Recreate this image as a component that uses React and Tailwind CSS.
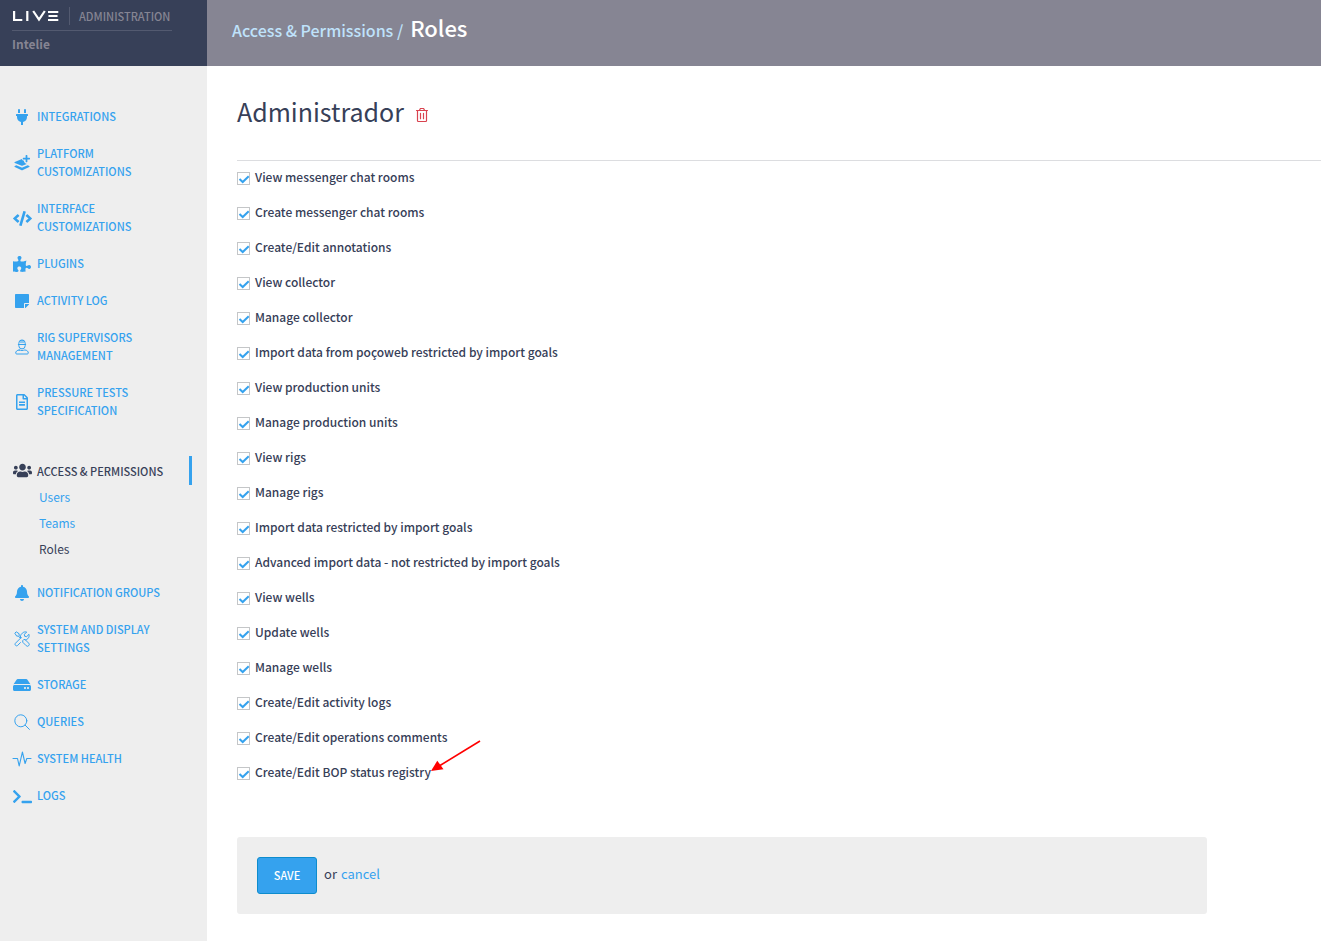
import React, { useState } from "react";
import {
  FaPlug,
  FaCode,
  FaPuzzlePiece,
  FaStickyNote,
  FaRegFileAlt,
  FaUsers,
  FaBell,
  FaHdd,
  FaTerminal,
} from "react-icons/fa";

function LayersPlusIcon() {
  return (
    <svg viewBox="0 0 16 16" className="size-4" fill="currentColor" aria-hidden="true">
      <path d="M9.300 2.700h2.300V.6c0-.3.300-.6.600-.6h.6c.3 0 .6.300.6.600v2.100h2.100c.3 0 .5.200.5.500v.8c0 .3-.2.500-.5.500h-2.100v2.100c0 .3-.3.600-.6.600h-.6c-.3 0-.6-.3-.6-.6V4.500H9.300c-.3 0-.5-.2-.5-.5v-.8c0-.3.200-.5.500-.5Z" />
      <path d="M7.300 4.200 8 4c.1 1 .9 1.700 1.900 1.800C10 7.400 11.200 8.700 12.800 8.900L8.900 10.600a2.200 2.200 0 0 1-1.800 0L.8 8c-.5-.2-.5-.9 0-1.100Z" />
      <path d="m.8 11 1.500-.7 4.700 2c.6.300 1.400.300 2 0l4.700-2 1.500.7c.5.200.5.900 0 1.100l-6.300 2.900c-.6.300-1.200.3-1.800 0L.8 12.100c-.5-.2-.5-.9 0-1.100Z" />
    </svg>
  );
}

function WorkerIcon() {
  return (
    <svg viewBox="0 0 16 16" className="size-4" fill="none" stroke="currentColor" strokeWidth="1" strokeLinecap="round" strokeLinejoin="round" aria-hidden="true">
      <path d="M4.300 5.500h7.400M4.800 5.500V4.200a3.200 3.200 0 0 1 6.400 0v1.300M7 1.200v2.500M9 1.200v2.500" />
      <path d="M4.800 6v.7a3.200 3.200 0 0 0 6.400 0V6" />
      <path d="M5.200 11C3 11 1.700 12.500 1.700 14c0 .6.400 1 1 1h10.600c.6 0 1-.4 1-1 0-1.500-1.300-3-3.500-3-1 0-1.600.5-2.800.5s-1.800-.5-2.800-.5Z" />
    </svg>
  );
}

function ToolsIcon() {
  return (
    <svg viewBox="0 0 16 16" className="size-4" fill="none" stroke="currentColor" strokeWidth="1" strokeLinejoin="round" aria-hidden="true">
      <path d="M.8 2.200 2.200.8l2.900 1.900v1.600l2.500 2.500M.8 2.200l1.900 2.900h1.600l2.500 2.500" />
      <path d="m8.800 9.600 1-1.100 1.300.1 3.600 3.600a1.700 1.700 0 0 1-2.500 2.500L8.700 11.200Z" />
      <path d="m6.700 11.300-3.200 3.300a1.600 1.600 0 0 1-2.200-2.200l5.300-5.300c-.5-1.800.1-3.700 1.700-4.900C9.400 1 11.100.6 12.700 1l-2.300 2.300.3 2 2 .3L15 3.300c.4 1.600 0 3.200-1.200 4.400-.8.700-1.700 1.200-2.700 1.300" />
    </svg>
  );
}

function SearchIcon() {
  return (
    <svg viewBox="0 0 16 16" className="size-4" fill="none" stroke="currentColor" strokeWidth="1" strokeLinecap="round" aria-hidden="true">
      <circle cx="6.800" cy="6.800" r="6" />
      <path d="m11.200 11.200 4.200 4.200" />
    </svg>
  );
}

function PulseIcon() {
  return (
    <svg viewBox="0 0 20 16" className="h-4 w-5" fill="none" stroke="currentColor" strokeWidth="1.100" strokeLinejoin="round" strokeLinecap="round" aria-hidden="true">
      <path d="M1 7.500h4.500l1.700 7.500L10.400 1l2.700 11.500 1.700-5H19" />
    </svg>
  );
}

function TrashIcon() {
  return (
    <svg viewBox="0 0 14 16" className="h-4 w-3.5" fill="none" stroke="currentColor" strokeWidth="1.200" strokeLinecap="round" strokeLinejoin="round" aria-hidden="true">
      <path d="M1.500 3.500h11M4.500 3.300l.9-1.800h3.200l.9 1.800M2.500 3.700v10c0 .5.300.8.800.8h7.400c.5 0 .8-.3.800-.8v-10M5.500 6.300v5.400M8.500 6.300v5.400" />
    </svg>
  );
}

function LiveLogo() {
  return (
    <svg viewBox="0 0 48 12" className="h-3 w-12" fill="none" stroke="currentColor" strokeWidth="2.200" role="img" aria-label="Live">
      <path d="M2.100 1v9h8.200M15.300 1v10.100M21.200 1l5.800 8.600L32.800 1M36 2h10.300M36.500 6h9M36 10h10.300" />
    </svg>
  );
}

const beforeItems = [
  { label: "Integrations", icon: <FaPlug className="size-4" /> },
  { label: "Platform customizations", icon: <LayersPlusIcon /> },
  { label: "Interface customizations", icon: <FaCode className="size-[19px]" /> },
  { label: "Plugins", icon: <FaPuzzlePiece className="size-[18px]" /> },
  { label: "Activity log", icon: <FaStickyNote className="size-4" /> },
  { label: "Rig supervisors management", icon: <WorkerIcon /> },
  { label: "Pressure tests specification", icon: <FaRegFileAlt className="size-4" /> },
];

const afterItems = [
  { label: "Notification groups", icon: <FaBell className="size-4" /> },
  { label: "System and display settings", icon: <ToolsIcon /> },
  { label: "Storage", icon: <FaHdd className="size-[18px]" /> },
  { label: "Queries", icon: <SearchIcon /> },
  { label: "System health", icon: <PulseIcon /> },
  { label: "Logs", icon: <FaTerminal className="size-[19px]" /> },
];

const permissions = [
  "View messenger chat rooms",
  "Create messenger chat rooms",
  "Create/Edit annotations",
  "View collector",
  "Manage collector",
  "Import data from poçoweb restricted by import goals",
  "View production units",
  "Manage production units",
  "View rigs",
  "Manage rigs",
  "Import data restricted by import goals",
  "Advanced import data - not restricted by import goals",
  "View wells",
  "Update wells",
  "Manage wells",
  "Create/Edit activity logs",
  "Create/Edit operations comments",
  "Create/Edit BOP status registry",
];

function NavItem({ label, icon }) {
  return (
    <li>
      <a href="#" className="flex items-center gap-[5px] text-[11px] leading-[18px] font-medium text-[#35a2ee] uppercase">
        <span className="flex h-[18px] w-5 shrink-0 items-center justify-center pt-0.5">{icon}</span>
        <span className="w-32">{label}</span>
      </a>
    </li>
  );
}

function Arrow() {
  return (
    <svg viewBox="0 0 50 32" className="pointer-events-none absolute bottom-[9px] left-full h-8 w-[50px]" aria-hidden="true">
      <path d="M49 1 9 25.500" stroke="#ff0000" strokeWidth="1.600" fill="none" />
      <path d="m0 31 6.300-10.300 6.200 8.600Z" fill="#ff0000" />
    </svg>
  );
}

function Permission({ label, id, marked }) {
  const [checked, setChecked] = useState(true);
  return (
    <li className="flex h-[35px] items-start gap-[5px]">
      <span className="relative mt-[11px] size-[13px] shrink-0">
        <input
          id={id}
          type="checkbox"
          checked={checked}
          onChange={(e) => setChecked(e.target.checked)}
          className="peer block size-[13px] appearance-none border border-[#c4c6c8] bg-white"
        />
        <svg viewBox="0 0 13 13" className="pointer-events-none absolute inset-0 size-[13px] text-[#35a2ee] opacity-0 peer-checked:opacity-100" fill="none" stroke="currentColor" strokeWidth="2" aria-hidden="true">
          <path d="m2.500 7 3.200 3L11.700 4.200" />
        </svg>
      </span>
      <label htmlFor={id} className="relative mt-[7px] text-[12px] leading-[18px] font-medium">
        {label}
        {marked && <Arrow />}
      </label>
    </li>
  );
}

export default function App() {
  return (
    <div className="flex min-h-screen bg-white font-['Noto_Sans_CJK_SC','Noto_Sans',sans-serif] text-[#374058]">
      <aside className="flex w-[207px] shrink-0 flex-col bg-[#eeeeee]">
        <div className="h-[66px] bg-[#374058] px-3 pt-[7px] text-[#868593]">
          <div className="flex w-40 items-center border-b border-[#535a70] pb-[5px]">
            <span className="text-white">
              <LiveLogo />
            </span>
            <span className="ml-[9px] border-l border-[#535a70] pl-[9px] text-[11px] leading-[18px] font-medium">ADMINISTRATION</span>
          </div>
          <div className="pt-1 text-[12px] leading-[18px] font-bold">Intelie</div>
        </div>

        <nav className="pt-[41px] pl-3">
          <ul className="flex flex-col gap-[19px]">
            {beforeItems.map((item) => (
              <NavItem key={item.label} {...item} />
            ))}
          </ul>
          <div className="mt-[37px]">
            <a href="#" className="mr-[15px] flex h-[29px] items-center gap-[5px] border-r-[3px] border-[#35a2ee] text-[11px] leading-[18px] font-medium uppercase">
              <span className="flex w-5 shrink-0 justify-center">
                <FaUsers className="size-[19px]" />
              </span>
              Access &amp; permissions
            </a>
            <ul className="-mt-px pl-[27px] text-[12px] leading-[26px]">
              <li><a href="#" className="text-[#35a2ee]">Users</a></li>
              <li><a href="#" className="text-[#35a2ee]">Teams</a></li>
              <li><a href="#" aria-current="page">Roles</a></li>
            </ul>
          </div>
          <ul className="mt-[21px] flex flex-col gap-[19px]">
            {afterItems.map((item) => (
              <NavItem key={item.label} {...item} />
            ))}
          </ul>
        </nav>
      </aside>

      <div className="min-w-0 flex-1">
        <header className="flex h-[66px] items-start bg-[#868593] px-[25px] pt-[13px]">
          <h1 className="flex items-baseline gap-[7px] leading-7 font-medium text-white">
            <a href="#" className="text-[16px] text-[#bfe2fb]">Access &amp; Permissions /</a>
            <span className="text-[22px]">Roles</span>
          </h1>
        </header>

        <main className="pb-[27px] pl-[30px]">
          <div className="flex h-[95px] items-start gap-[11px] border-b border-[#dcdde0] pt-[27px]">
            <h2 className="text-[25px] leading-9">Administrador</h2>
            <button type="button" aria-label="Delete role" className="mt-3.5 text-[#d9434f]">
              <TrashIcon />
            </button>
          </div>

          <form onSubmit={(e) => e.preventDefault()}>
            <ul>
              {permissions.map((label, i) => (
                <Permission key={label} id={`permission-${i}`} label={label} marked={i === permissions.length - 1} />
              ))}
            </ul>
            <div className="mt-[46px] flex h-[77px] max-w-[970px] items-center rounded-[3px] bg-[#eeeeee] px-5">
              <button type="submit" className="h-[37px] w-[60px] rounded-[3px] border border-[#0d8ccd] bg-[#35a2ee] text-[11px] font-medium text-white">
                SAVE
              </button>
              <p className="ml-[7px] flex gap-1 pb-1 text-[13px] leading-5">
                or
                <a href="#" className="text-[#35a2ee]">cancel</a>
              </p>
            </div>
          </form>
        </main>
      </div>
    </div>
  );
}
